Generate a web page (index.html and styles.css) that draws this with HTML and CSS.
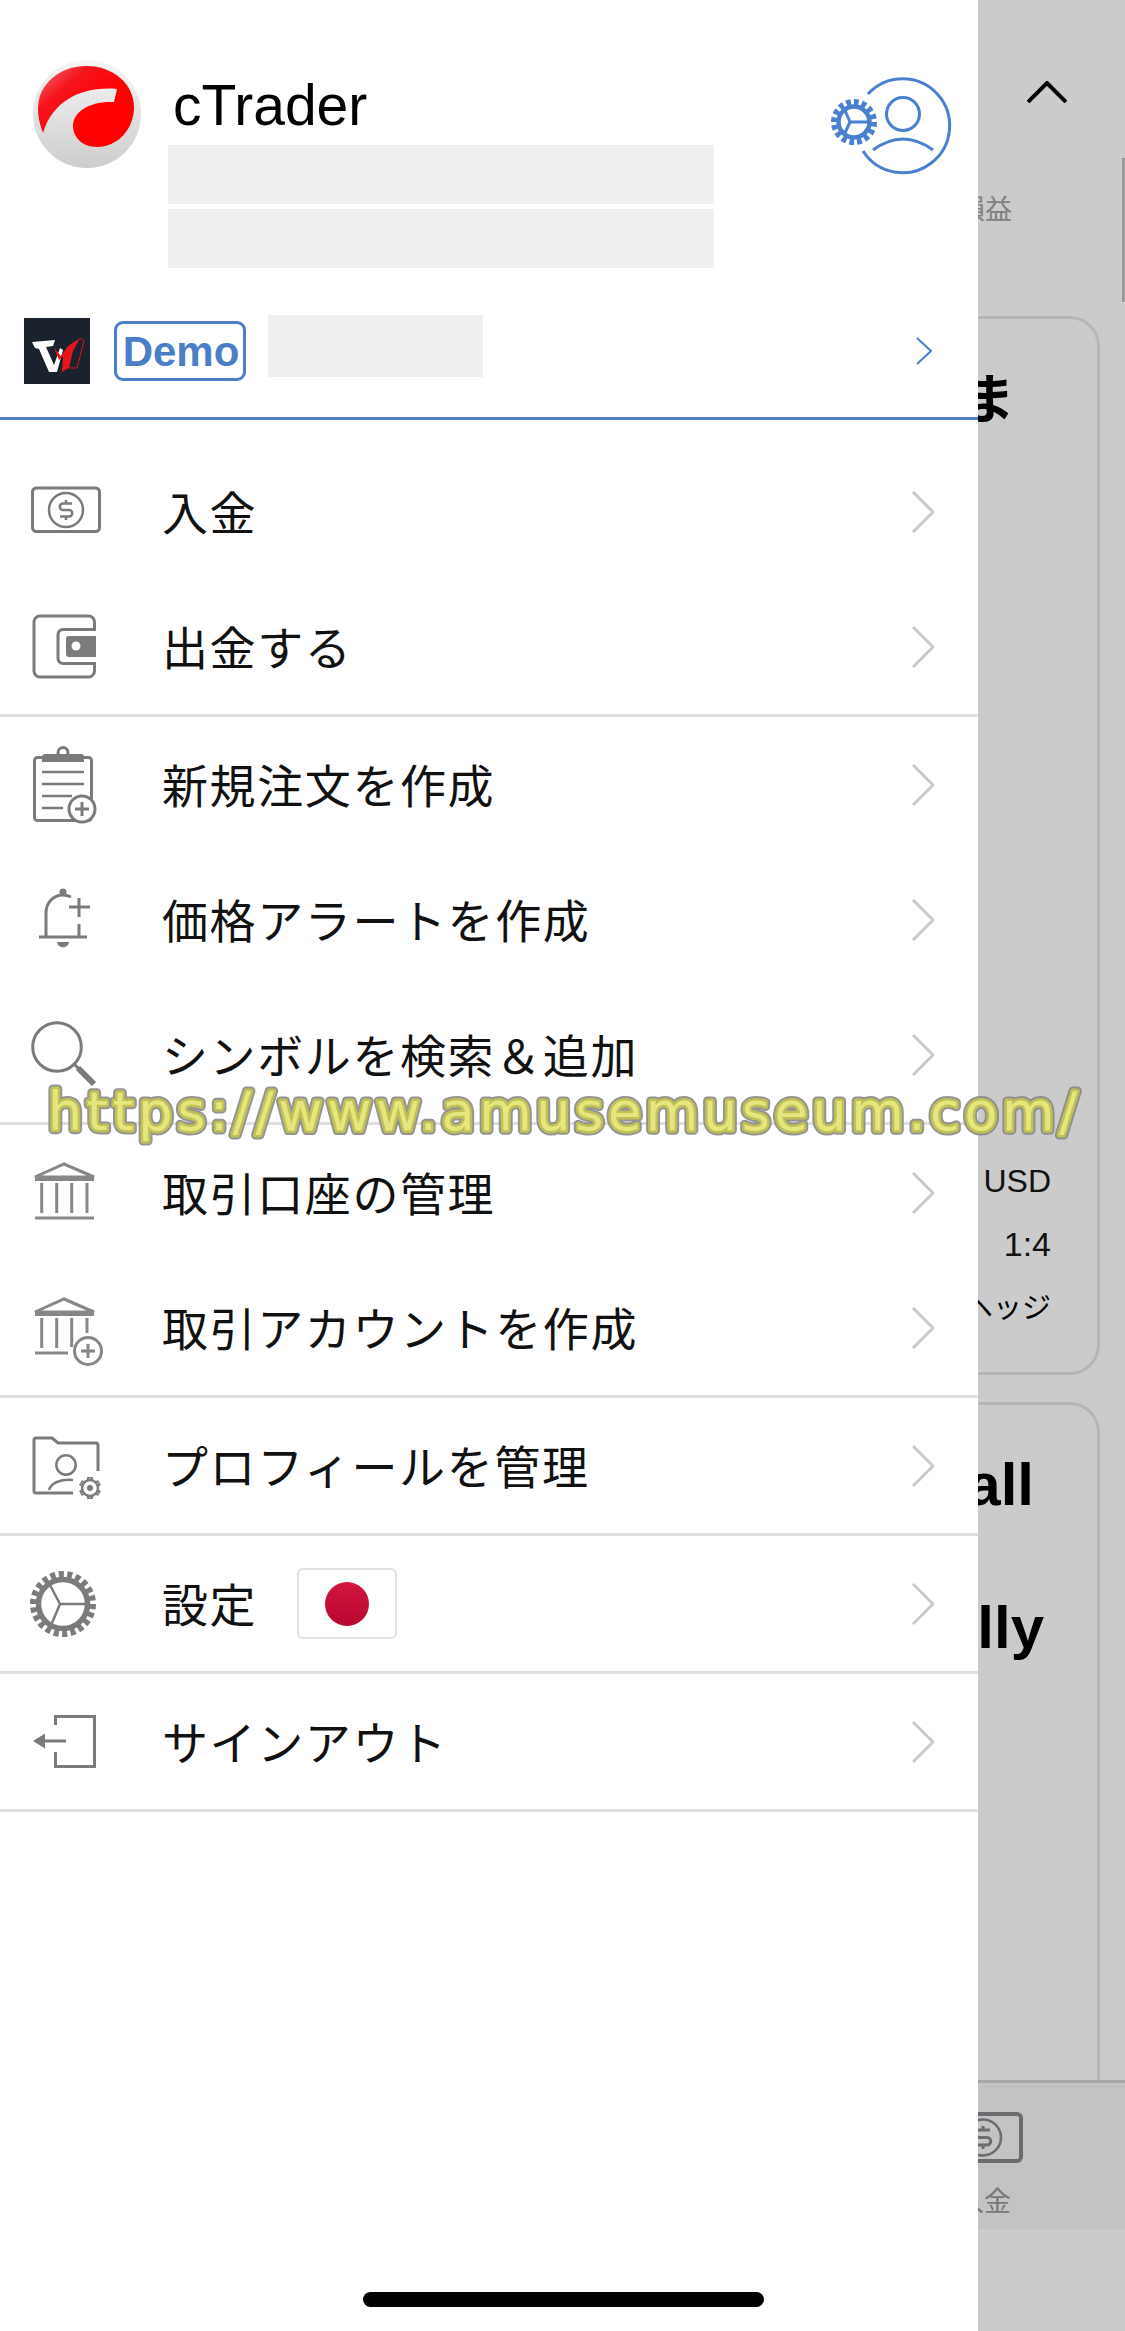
FILE: index.html
```html
<!DOCTYPE html>
<html lang="ja">
<head>
    <meta charset="UTF-8">
    <title>cTrader</title>
    <link rel="stylesheet" href="styles.css">
</head>
<body>
    <div class="screen">
        <div class="drawer">
            <div class="drawer-head">
                <svg class="app-logo" viewBox="0 0 108 108">
                    <defs>
                        <linearGradient id="logo-grey" x1="0" y1="0" x2="0" y2="1">
                            <stop offset="0" stop-color="#f6f6f6"/>
                            <stop offset="1" stop-color="#cdcdcd"/>
                        </linearGradient>
                        <linearGradient id="logo-red" x1="0" y1="0" x2="0.6" y2="0.6">
                            <stop offset="0" stop-color="#f2777c"/>
                            <stop offset="0.45" stop-color="#f5141c"/>
                            <stop offset="1" stop-color="#ff0000"/>
                        </linearGradient>
                    </defs>
                    <circle fill="url(#logo-grey)" cx="54" cy="54" r="54"/>
                    <path fill="url(#logo-red)" d="M10 73C3 55 3 38 12 26C24 10 40 6 54 6C80 6 101 24 101 47C101 70 84 87 64 87C48 87 40 76 40 66C40 52 56 41 81 42L84 29C50 26 20 40 10 73Z"/>
                </svg>
                <div class="head-info">
                    <div class="app-name">cTrader</div>
                    <div class="masked masked-line"></div>
                    <div class="masked masked-line"></div>
                </div>
                <svg class="profile-icon" viewBox="0 0 130 110">
                    <path d="M42 24A47 47 0 1 1 37 81"/>
                    <circle cx="77" cy="44" r="16.5"/>
                    <path d="M47 80Q77 58 107 80"/>
                    <circle cx="28" cy="52" r="15.5" stroke-width="4.5"/>
                    <circle cx="28" cy="52" r="20" stroke-width="6" pathLength="32" stroke-dasharray="1.2 0.8"/>
                    <path d="M24 52H43M24 52L18 38M24 52L18 65"/>
                </svg>
            </div>

            <div class="account">
                <svg class="broker-logo" viewBox="0 0 66 66">
                    <rect width="66" height="66" fill="#19222d"/>
                    <polygon fill="#fff" points="8,24 31,22 29,28 22,29 30,47 36,30 39,32 33,54 25,54 15,31 11,30"/>
                    <polygon fill="#e8141c" points="30,30 37,38 44,28 56,20 49,33 45,50 38,54 39,38 35,42"/>
                    <path fill="none" stroke="#e8141c" d="M56 20L60 23L53 50L45 50"/>
                </svg>
                <span class="demo-badge">Demo</span>
                <div class="masked masked-account"></div>
                <svg class="chev-blue" viewBox="0 0 16 28"><path d="M1 1L15 14L1 27"/></svg>
            </div>

            <div class="menu-group first-group">
                <div class="menu-item">
                    <svg class="ic" viewBox="0 0 85 85">
                        <rect x="12.5" y="19" width="67" height="43.5" rx="4"/>
                        <circle cx="46" cy="41" r="17" stroke-width="2.5"/>
                        <path stroke-width="2.5" d="M52 34.5H43a3.2 3.2 0 0 0 0 6.5h6a3.2 3.2 0 0 1 0 6.5H40M46 31v3.5M46 47.5V51"/>
                    </svg>
                    <span class="label">入金</span>
                    <svg class="chev" viewBox="0 0 22 42"><path d="M1 1L21 21L1 41"/></svg>
                </div>
                <div class="menu-item">
                    <svg class="ic" viewBox="0 0 85 85">
                        <path d="M74.5 25V18a6 6 0 0 0-6-6H20a6 6 0 0 0-6 6V67a6 6 0 0 0 6 6H68.5a6 6 0 0 0 6-6V59"/>
                        <path d="M76 25.5H43a5 5 0 0 0-5 5V54.5a5 5 0 0 0 5 5H76"/>
                        <path class="solid" d="M76 32V53H49a3 3 0 0 1-3-3V35a3 3 0 0 1 3-3Z"/>
                        <circle class="hole" cx="56" cy="42" r="4.5"/>
                    </svg>
                    <span class="label">出金する</span>
                    <svg class="chev" viewBox="0 0 22 42"><path d="M1 1L21 21L1 41"/></svg>
                </div>
            </div>

            <div class="menu-group">
                <div class="menu-item">
                    <svg class="ic" viewBox="0 0 85 85">
                        <rect x="14.5" y="15.5" width="57" height="63" rx="3"/>
                        <circle class="hole-ring" cx="43" cy="10.5" r="5"/>
                        <path class="solid" d="M22 20V15a3 3 0 0 1 3-3H61a3 3 0 0 1 3 3v5Z"/>
                        <path stroke-width="2.5" d="M22 30H64M22 42H64M22 54H52M22 66H43"/>
                        <circle class="hole-ring" cx="62" cy="67" r="13"/>
                        <path d="M55 67H69M62 60V74"/>
                    </svg>
                    <span class="label">新規注文を作成</span>
                    <svg class="chev" viewBox="0 0 22 42"><path d="M1 1L21 21L1 41"/></svg>
                </div>
                <div class="menu-item">
                    <svg class="ic" viewBox="0 0 85 85">
                        <path d="M26 60V36C26 26 33 18 43 18C46 18 49 19 51 20"/>
                        <circle class="solid" cx="43" cy="15" r="3.5"/>
                        <path d="M19 60H67M49 30H70M59 21V40M59 47V60"/>
                        <path class="solid" d="M37 65H49C48 72 38 72 37 65Z"/>
                    </svg>
                    <span class="label">価格アラートを作成</span>
                    <svg class="chev" viewBox="0 0 22 42"><path d="M1 1L21 21L1 41"/></svg>
                </div>
                <div class="menu-item">
                    <svg class="ic" viewBox="0 0 85 85">
                        <circle cx="37" cy="35" r="24.3"/>
                        <path d="M54 52L60 58"/>
                        <path stroke-width="6" d="M58 56L74 72"/>
                    </svg>
                    <span class="label">シンボルを検索＆追加</span>
                    <svg class="chev" viewBox="0 0 22 42"><path d="M1 1L21 21L1 41"/></svg>
                </div>
            </div>

            <div class="menu-group">
                <div class="menu-item">
                    <svg class="ic ic-light" viewBox="0 0 85 85">
                        <path d="M15 27L44 14L74 27ZM15 29.5H74M21.7 33V63M36.7 33V63M51.7 33V63M67 33V63M15 68H74"/>
                    </svg>
                    <span class="label">取引口座の管理</span>
                    <svg class="chev" viewBox="0 0 22 42"><path d="M1 1L21 21L1 41"/></svg>
                </div>
                <div class="menu-item">
                    <svg class="ic ic-light" viewBox="0 0 85 85">
                        <path d="M15 27L44 14L74 27ZM15 29.5H74M21.7 33V63M36.7 33V63M51.7 33V62M67 33V48M15 68H48"/>
                        <circle class="hole-ring" cx="68" cy="66" r="13.5"/>
                        <path d="M61 66H75M68 59V73"/>
                    </svg>
                    <span class="label">取引アカウントを作成</span>
                    <svg class="chev" viewBox="0 0 22 42"><path d="M1 1L21 21L1 41"/></svg>
                </div>
            </div>

            <div class="menu-group">
                <div class="menu-item">
                    <svg class="ic" viewBox="0 0 85 85">
                        <path d="M78 48V22a2 2 0 0 0-2-2H38L32 15H16a2 2 0 0 0-2 2V68a2 2 0 0 0 2 2H53"/>
                        <circle stroke-width="2.5" cx="46" cy="42" r="9.7"/>
                        <path stroke-width="2.5" d="M29 67C31 60 40 56 53 57"/>
                        <path stroke-width="6" d="M70 54V76M60.5 59.5L79.5 70.5M60.5 70.5L79.5 59.5"/>
                        <path class="teeth-inner" d="M70 55.5V74.5M61.8 60.2L78.2 69.8M61.8 69.8L78.2 60.2"/>
                        <circle class="hole-ring" stroke-width="2.5" cx="70" cy="65" r="8"/>
                        <circle class="solid" cx="70" cy="65" r="3"/>
                    </svg>
                    <span class="label">プロフィールを管理</span>
                    <svg class="chev" viewBox="0 0 22 42"><path d="M1 1L21 21L1 41"/></svg>
                </div>
            </div>

            <div class="menu-group">
                <div class="menu-item">
                    <svg class="ic" viewBox="0 0 85 85">
                        <circle cx="43" cy="43" r="24.5" stroke-width="5.5"/>
                        <circle cx="43" cy="43" r="29.5" stroke-width="7" pathLength="44" stroke-dasharray="1.2 0.8"/>
                        <path stroke-width="2.5" d="M40 43H65M40 43L30 24M40 43L32 62"/>
                    </svg>
                    <span class="label">設定</span>
                    <div class="flag"><span class="flag-dot"></span></div>
                    <svg class="chev" viewBox="0 0 22 42"><path d="M1 1L21 21L1 41"/></svg>
                </div>
            </div>

            <div class="menu-group">
                <div class="menu-item">
                    <svg class="ic" viewBox="0 0 85 85">
                        <path d="M35.5 26V17.5H74.5V67.5H35.5V53"/>
                        <path d="M25 42H46"/>
                        <path class="solid" d="M13 42L25 34.5V49.5Z"/>
                    </svg>
                    <span class="label">サインアウト</span>
                    <svg class="chev" viewBox="0 0 22 42"><path d="M1 1L21 21L1 41"/></svg>
                </div>
            </div>
        </div>

        <div class="behind">
            <div class="behind-top">
                <svg class="chev-up" viewBox="0 0 40 22"><path d="M1 21L20 2L39 21"/></svg>
                <div class="pl-label">損益</div>
                <div class="scroll-thumb"></div>
            </div>
            <div class="card card-one">
                <div class="card-title">ま</div>
                <div class="card-line line-usd">USD</div>
                <div class="card-line line-ratio">1:4</div>
                <div class="card-line line-hedge">ヘッジ</div>
            </div>
            <div class="card card-two">
                <div class="big-word word-all">all</div>
                <div class="big-word word-ally">ally</div>
            </div>
            <div class="tabbar">
                <svg class="tab-icon" viewBox="0 0 80 52">
                    <rect x="2" y="2" width="76" height="47" rx="4"/>
                    <circle cx="40" cy="25.5" r="18" stroke-width="2.5"/>
                    <path stroke-width="3" d="M47 18H36a3.5 3.5 0 0 0 0 7.5h8a3.5 3.5 0 0 1 0 7.5H33M40 14v4M40 33v4"/>
                </svg>
                <div class="tab-label">入金</div>
            </div>
        </div>

        <svg class="watermark" viewBox="0 0 1125 70">
            <text class="wm-edge" x="48" y="50" aria-hidden="true">https://www.amusemuseum.com/</text>
            <text class="wm-face" x="48" y="50">https://www.amusemuseum.com/</text>
        </svg>
        <div class="home-bar"></div>
    </div>
</body>
</html>
```
FILE: styles.css
```css
body {
    margin: 0;
    background: #cbcbcb;
    font-family: "Noto Sans CJK JP", "Liberation Sans", sans-serif;
}

.screen {
    position: relative;
    display: flex;
    width: 1125px;
    height: 2331px;
    overflow: hidden;
}

.drawer {
    width: 978px;
    flex-shrink: 0;
    background: #fff;
}

.drawer-head {
    display: flex;
    align-items: flex-start;
    height: 240px;
    padding: 60px 0 0 33px;
}

.app-logo {
    width: 108px;
    height: 108px;
    margin-right: 27px;
    flex-shrink: 0;
}

.head-info {
    width: 546px;
    flex-shrink: 0;
}

.app-name {
    height: 85px;
    margin-left: 5px;
    font-family: "Liberation Sans", sans-serif;
    font-size: 57px;
    line-height: 90px;
    color: #000;
}

.masked {
    background: #f0efed;
}

.masked-line {
    height: 59px;
    margin-bottom: 5px;
}

.profile-icon {
    width: 130px;
    height: 110px;
    margin: 10px 0 0 112px;
    flex-shrink: 0;
    fill: none;
    stroke: #4a80d0;
    stroke-width: 3;
}

.account {
    display: flex;
    align-items: flex-start;
    height: 120px;
    padding: 15px 46px 0 24px;
    box-sizing: border-box;
    border-bottom: 3px solid #4a7ec6;
}

.broker-logo {
    width: 66px;
    height: 66px;
    margin-top: 3px;
    flex-shrink: 0;
}

.demo-badge {
    width: 132px;
    height: 60px;
    margin: 6px 0 0 24px;
    padding-left: 2px;
    box-sizing: border-box;
    border: 3px solid #4a7ec6;
    border-radius: 9px;
    text-align: center;
    font-family: "Liberation Sans", sans-serif;
    font-size: 42px;
    font-weight: bold;
    line-height: 56px;
    color: #4a7ec6;
}

.masked-account {
    width: 215px;
    height: 62px;
    margin-left: 22px;
}

.chev-blue {
    width: 16px;
    height: 28px;
    margin: 22px 0 0 auto;
    fill: none;
    stroke: #4a80d0;
    stroke-width: 2;
}

.first-group {
    padding-top: 24px;
}

.menu-group {
    border-bottom: 3px solid #dfdfdf;
}

.menu-item {
    display: flex;
    align-items: center;
    height: 135px;
    padding: 0 44px 0 20px;
}

.ic {
    width: 85px;
    height: 85px;
    flex-shrink: 0;
    fill: none;
    stroke: #7b7b7b;
    stroke-width: 3;
}

.ic-light {
    stroke: #878787;
}

.ic .solid {
    fill: #7b7b7b;
    stroke: none;
}

.ic .hole {
    fill: #fff;
    stroke: none;
}

.ic .hole-ring {
    fill: #fff;
}

.ic .teeth-inner {
    stroke: #fff;
    stroke-width: 2;
}

.label {
    margin: 0 0 4px 57px;
    font-size: 46px;
    font-weight: 400;
    letter-spacing: 1.6px;
    line-height: 60px;
    color: #111;
    white-space: nowrap;
}

.flag {
    display: flex;
    align-items: center;
    justify-content: center;
    width: 100px;
    height: 71px;
    margin-left: 40px;
    box-sizing: border-box;
    border: 2px solid #e2e2e2;
    border-radius: 6px;
}

.flag-dot {
    width: 44px;
    height: 44px;
    border-radius: 50%;
    background: linear-gradient(#d4153f, #b70730);
}

.chev {
    width: 22px;
    height: 42px;
    margin-left: auto;
    flex-shrink: 0;
    fill: none;
    stroke: #c8c8c8;
    stroke-width: 3;
}

/* app under the drawer, dimmed */
.behind {
    display: flex;
    flex-direction: column;
    flex: 1;
    min-width: 0;
    overflow: hidden;
    background: #cbcbcb;
}

.behind-top {
    position: relative;
    height: 316px;
    flex-shrink: 0;
}

.chev-up {
    display: block;
    width: 40px;
    height: 22px;
    margin: 81px 0 0 49px;
    fill: none;
    stroke: #000;
    stroke-width: 4;
}

.pl-label {
    display: flex;
    justify-content: flex-end;
    margin: 87px 113px 0 0;
    font-size: 27px;
    line-height: 36px;
    color: #808080;
    white-space: nowrap;
}

.scroll-thumb {
    position: absolute;
    top: 158px;
    right: 0;
    width: 3px;
    height: 144px;
    background: #999;
}

.card {
    display: flex;
    flex-direction: column;
    align-items: flex-end;
    width: 122px;
    box-sizing: border-box;
    flex-shrink: 0;
    border: 3px solid #b5b5b5;
    border-left: 0;
}

.card-one {
    height: 1059px;
    padding-right: 46px;
    border-radius: 0 30px 30px 0;
    margin-bottom: 27px;
}

.card-two {
    flex: 1;
    padding-right: 46px;
    border-bottom: 0;
    border-radius: 0 30px 0 0;
}

.card-title {
    margin: 42px 36px 0 0;
    font-size: 54px;
    font-weight: bold;
    line-height: 70px;
    color: #000;
    white-space: nowrap;
}

.card-line {
    font-family: "Liberation Sans", "Noto Sans CJK JP", sans-serif;
    font-size: 32px;
    line-height: 40px;
    color: #111;
    white-space: nowrap;
}

.line-usd {
    margin-top: 730px;
}

.line-ratio {
    margin-top: 23px;
    font-size: 34px;
}

.line-hedge {
    margin-top: 21px;
    font-family: "Noto Sans CJK JP", sans-serif;
    font-size: 29px;
    color: #000;
}

.big-word {
    font-family: "Liberation Sans", sans-serif;
    font-size: 60px;
    font-weight: bold;
    line-height: 70px;
    color: #000;
    white-space: nowrap;
}

.word-all {
    margin: 45px 17px 0 0;
}

.word-ally {
    margin: 73px 7px 0 0;
}

.tabbar {
    display: flex;
    flex-direction: column;
    align-items: flex-end;
    height: 149px;
    flex-shrink: 0;
    box-sizing: border-box;
    padding: 29px 0 0;
    border-top: 3px solid #a6a6a6;
    margin-bottom: 102px;
    background: #c3c3c3;
}

.tab-icon {
    width: 80px;
    height: 52px;
    margin-right: 102px;
    flex-shrink: 0;
    fill: none;
    stroke: #6b6b70;
    stroke-width: 4;
}

.tab-label {
    margin: 18px 114px 0 0;
    font-size: 27px;
    line-height: 36px;
    color: #77777b;
    white-space: nowrap;
}

/* stamped over the whole screenshot */
.watermark {
    position: absolute;
    top: 1080px;
    left: 0;
    width: 1125px;
    height: 70px;
}

.watermark text {
    font-family: "DejaVu Sans", sans-serif;
    font-size: 54px;
    letter-spacing: 4.6px;
    stroke-linejoin: round;
}

.wm-edge {
    fill: #888;
    stroke: #888;
    stroke-width: 9px;
    stroke-opacity: 0.9;
}

.wm-face {
    fill: #e6e67e;
    stroke: #c0c056;
    stroke-width: 5px;
    paint-order: stroke fill;
}

.home-bar {
    position: absolute;
    bottom: 24px;
    left: 363px;
    width: 401px;
    height: 15px;
    border-radius: 8px;
    background: #000;
}
```
